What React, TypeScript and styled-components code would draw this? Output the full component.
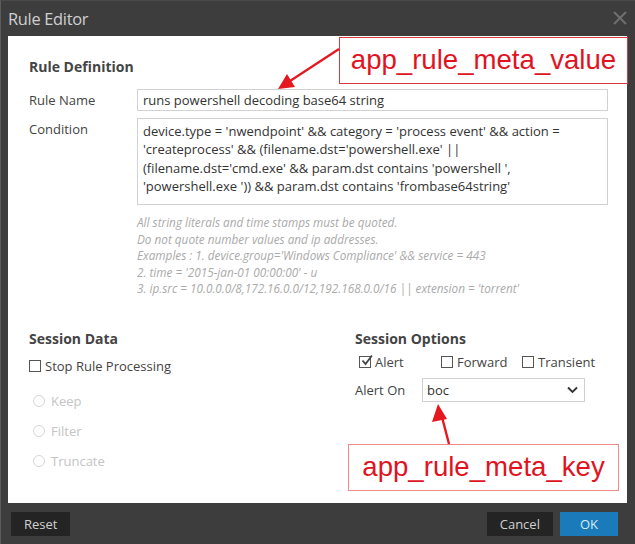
import React from 'react';
import styled, { createGlobalStyle } from 'styled-components';

const GlobalStyle = createGlobalStyle`
  html, body {
    margin: 0;
    padding: 0;
    background: #ffffff;
  }
  body {
    font-family: 'Open Sans', 'DejaVu Sans', sans-serif;
  }
`;

const conditionLines = [
  "device.type = 'nwendpoint' && category = 'process event' && action =",
  "'createprocess' && (filename.dst='powershell.exe' ||",
  "(filename.dst='cmd.exe' && param.dst contains 'powershell ',",
  "'powershell.exe ')) && param.dst contains 'frombase64string'",
];

const helpLines = [
  'All string literals and time stamps must be quoted.',
  'Do not quote number values and ip addresses.',
  "Examples : 1. device.group='Windows Compliance' && service = 443",
  "2. time = '2015-jan-01 00:00:00' - u",
  "3. ip.src = 10.0.0.0/8,172.16.0.0/12,192.168.0.0/16 || extension = 'torrent'",
];

const App: React.FC = () => {
  return (
    <>
      <GlobalStyle />
      <Dialog>
        <TitleBar>
          <Title>Rule Editor</Title>
          <CloseBtn>
            <svg width='14' height='14' viewBox='0 0 14 14'>
              <path d='M1 1 L13 13 M13 1 L1 13' stroke='#6f6f6f' strokeWidth='2' />
            </svg>
          </CloseBtn>
        </TitleBar>

        <Body>
          <SectionTitle>Rule Definition</SectionTitle>
          <FieldRow>
            <Label>Rule Name</Label>
            <TextInput>runs powershell decoding base64 string</TextInput>
          </FieldRow>
          <FieldRow>
            <Label>Condition</Label>
            <TextArea>
              {conditionLines.map((l) => (
                <div key={l}>{l}</div>
              ))}
            </TextArea>
          </FieldRow>
          <Help>
            {helpLines.map((l) => (
              <div key={l}>{l}</div>
            ))}
          </Help>

          <Sessions>
            <div>
              <SectionTitle>Session Data</SectionTitle>
              <CheckRow>
                <Check label='Stop Rule Processing' />
              </CheckRow>
              <Radios>
                <Radio label='Keep' />
                <Radio label='Filter' />
                <Radio label='Truncate' />
              </Radios>
            </div>
            <div>
              <SectionTitle>Session Options</SectionTitle>
              <OptionsRow>
                <Check label='Alert' checked width={82} />
                <Check label='Forward' width={81} />
                <Check label='Transient' />
              </OptionsRow>
              <AlertOnRow>
                <AlertLabel>Alert On</AlertLabel>
                <Select>
                  <span>boc</span>
                  <svg width='11' height='8' viewBox='0 0 11 8'>
                    <path d='M1 1.5 L5.5 6 L10 1.5' fill='none' stroke='#333' strokeWidth='1.8' />
                  </svg>
                </Select>
              </AlertOnRow>
            </div>
          </Sessions>
        </Body>

        <Footer>
          <Button>Reset</Button>
          <Spacer />
          <Button>Cancel</Button>
          <Button primary>OK</Button>
        </Footer>

        <Callout style={{ left: 338, top: 36, width: 289 }}>app_rule_meta_value</Callout>
        <Callout soft style={{ left: 347, top: 443, width: 271 }}>
          app_rule_meta_key
        </Callout>
        <Arrows width='635' height='544' viewBox='0 0 635 544'>
          <line x1='338' y1='48' x2='289' y2='80' stroke='#e5171f' strokeWidth='2.2' />
          <polygon points='277,88 286,73 294,86' fill='#e5171f' />
          <line x1='448' y1='443' x2='441' y2='416' stroke='#e5171f' strokeWidth='2.4' />
          <polygon points='437,403 431,421 446,418' fill='#e5171f' />
        </Arrows>
      </Dialog>
    </>
  );
};

const Check: React.FC<{ label: string; checked?: boolean; width?: number }> = ({
  label,
  checked,
  width,
}) => (
  <CheckItem style={width ? { width } : undefined}>
    <Box>
      {checked && (
        <svg width='14' height='14' viewBox='0 0 14 14'>
          <path d='M2.5 6.5 L5.5 10 L12 1.5' fill='none' stroke='#444' strokeWidth='1.8' />
        </svg>
      )}
    </Box>
    <span>{label}</span>
  </CheckItem>
);

const Radio: React.FC<{ label: string }> = ({ label }) => (
  <RadioItem>
    <Circle />
    <span>{label}</span>
  </RadioItem>
);

const Dialog = styled.div`
  position: relative;
  width: 635px;
  height: 544px;
  box-sizing: border-box;
  display: flex;
  flex-direction: column;
  background: #3d3d3d;
  border-left: 1px solid #5c5c5c;
  border-top: 1px solid #4a4a4a;
`;

const TitleBar = styled.div`
  height: 35px;
  display: flex;
  align-items: center;
  padding: 0 8px 0 7px;
`;

const Title = styled.div`
  flex: 1;
  color: #cfcfcf;
  font-size: 16.4px;
  letter-spacing: -0.3px;
`;

const CloseBtn = styled.div`
  display: flex;
  margin-top: -2px;
`;

const Body = styled.div`
  flex: 1;
  margin: 0 8px 0 7px;
  background: #ffffff;
  padding: 22px 19px 0 21px;
  color: #444;
  font-size: 13px;
`;

const SectionTitle = styled.div`
  font-weight: 700;
  font-size: 14px;
  line-height: 18px;
  color: #444;
  margin-bottom: 13px;
`;

const FieldRow = styled.div`
  display: grid;
  grid-template-columns: 108px 1fr;
  margin-bottom: 7px;
`;

const Label = styled.div`
  line-height: 22px;
  color: #444;
`;

const TextInput = styled.div`
  height: 22px;
  box-sizing: border-box;
  border: 1px solid #d2d2d2;
  padding: 0 5px;
  line-height: 20px;
  color: #333;
`;

const TextArea = styled.div`
  height: 87px;
  box-sizing: border-box;
  border: 1px solid #d2d2d2;
  padding: 3px 5px 2px;
  line-height: 18.3px;
  color: #333;
  white-space: nowrap;
`;

const Help = styled.div`
  margin: 9px 0 0 108px;
  font-style: italic;
  font-size: 11.75px;
  line-height: 16.5px;
  color: #aaa;
  white-space: nowrap;
`;

const Sessions = styled.div`
  display: grid;
  grid-template-columns: 326px 1fr;
  margin-top: 33px;
`;

const CheckRow = styled.div`
  margin-top: -5px;
`;

const CheckItem = styled.div`
  display: inline-flex;
  align-items: center;
  gap: 4px;
  line-height: 20px;
  color: #444;
`;

const Box = styled.span`
  position: relative;
  width: 10px;
  height: 10px;
  border: 1px solid #555;
  display: inline-flex;
  svg {
    position: absolute;
    left: 0;
    top: -3px;
  }
`;

const Radios = styled.div`
  margin-top: 15px;
  display: flex;
  flex-direction: column;
  gap: 10px;
  padding-left: 4px;
`;

const RadioItem = styled.div`
  display: flex;
  align-items: center;
  gap: 6px;
  line-height: 20px;
  color: #c4c4c4;
`;

const Circle = styled.span`
  width: 10px;
  height: 10px;
  border-radius: 50%;
  border: 1px solid #d6d6d6;
`;

const OptionsRow = styled.div`
  display: flex;
  padding-left: 4px;
  margin-top: -9px;
`;

const AlertOnRow = styled.div`
  display: flex;
  align-items: center;
  margin-top: 6px;
`;

const AlertLabel = styled.div`
  width: 67px;
`;

const Select = styled.div`
  width: 163px;
  height: 24px;
  box-sizing: border-box;
  border: 1px solid #d2d2d2;
  display: flex;
  align-items: center;
  justify-content: space-between;
  padding: 0 6px 0 4px;
  color: #333;
`;

const Footer = styled.div`
  height: 41px;
  display: flex;
  align-items: center;
  gap: 7px;
  padding: 0 17px 0 10px;
`;

const Spacer = styled.div`
  flex: 1;
`;

const Button = styled.div<{ primary?: boolean }>`
  height: 24px;
  padding: 0 ${(p) => (p.primary ? '20px' : '13px')};
  display: flex;
  align-items: center;
  font-size: 13px;
  background: ${(p) => (p.primary ? '#1b7bba' : '#242424')};
  color: ${(p) => (p.primary ? '#d6ebf8' : '#d0d0d0')};
`;

const Callout = styled.div<{ soft?: boolean }>`
  position: absolute;
  height: 47px;
  box-sizing: border-box;
  background: #ffffff;
  border: 1px solid ${(p) => (p.soft ? '#f08a8a' : '#d9393f')};
  font-family: 'Liberation Sans', Arial, sans-serif;
  font-size: 27.6px;
  line-height: 44px;
  color: #e0141f;
  text-align: center;
`;

const Arrows = styled.svg`
  position: absolute;
  left: 0;
  top: 0;
  pointer-events: none;
`;

export default App;
